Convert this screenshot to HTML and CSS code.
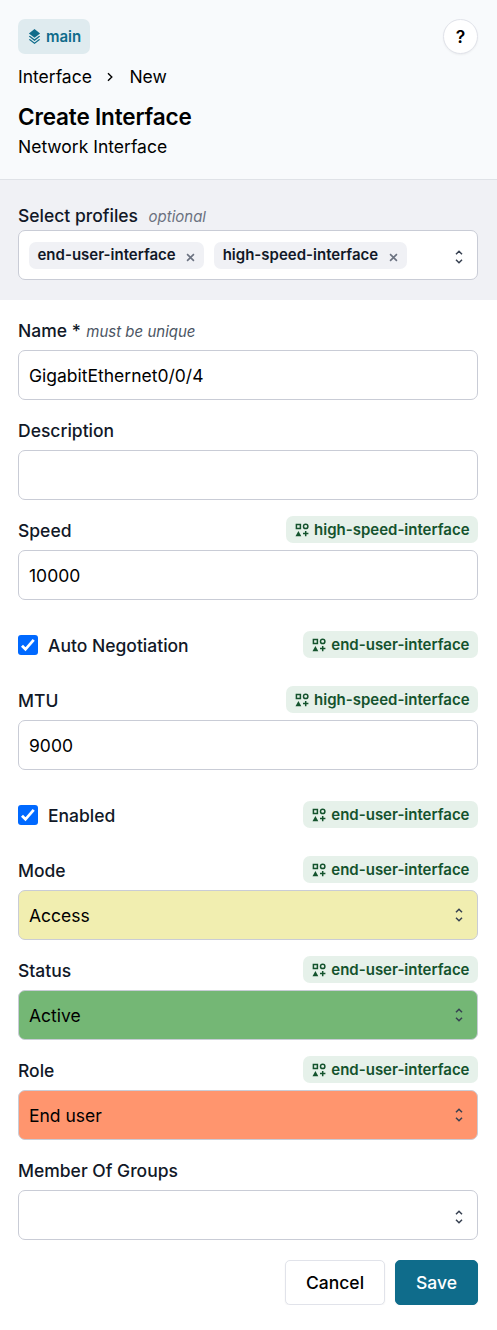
FILE: index.html
```html
<!DOCTYPE html>
<html lang="en">
<head>
<meta charset="utf-8">
<title>Create Interface</title>
<link rel="stylesheet" href="styles.css">
</head>
<body>
<svg class="sprite" aria-hidden="true">
  <symbol id="updown" viewBox="0 0 10 16"><path d="M2 5.200 5 2.200 8 5.200M2 10.800 5 13.800 8 10.800" fill="none" stroke="currentColor" stroke-width="1.5"/></symbol>
  <symbol id="shapes" viewBox="0 0 14 14"><path d="M1.4 1.4h4v4h-4z" fill="none" stroke="currentColor" stroke-width="1.5"/><circle cx="10.7" cy="3.4" r="2.2" fill="none" stroke="currentColor" stroke-width="1.5"/><path d="M3.4 8 6.300 13.300H.5z" fill="currentColor"/><path d="M10.7 7.900v5.400M8 10.6h5.400" fill="none" stroke="currentColor" stroke-width="1.5"/></symbol>
  <symbol id="cross" viewBox="0 0 10 10"><path d="m1.2 1.2 7.6 7.6m0-7.6-7.6 7.6" fill="none" stroke="currentColor" stroke-width="1.8"/></symbol>
</svg>
<header class="header">
  <div class="topbar">
    <button class="branch"><svg class="layers" viewBox="0 0 24 24"><path d="M12 0 3 7l9 7 9-7zM12 16.500 4.600 10.800 3 12l9 7 9-7-1.600-1.200zM12 21.500 4.600 15.800 3 17l9 7 9-7-1.600-1.200z" fill="currentColor"/></svg>main</button>
    <button class="help">?</button>
  </div>
  <nav class="crumbs"><span>Interface</span><svg class="crumb-arrow" viewBox="0 0 8 10"><path d="m2 1.200 3.800 3.800L2 8.800" fill="none" stroke="currentColor" stroke-width="1.400"/></svg><span>New</span></nav>
  <h1 class="title">Create Interface</h1>
  <p class="subtitle">Network Interface</p>
</header>
<section class="profiles">
  <div class="label-row"><span class="label">Select profiles</span><em class="hint hint-wide">optional</em></div>
  <div class="input select">
    <div class="chips">
      <span class="chip">end-user-interface<svg class="cross"><use href="#cross"/></svg></span>
      <span class="chip">high-speed-interface<svg class="cross"><use href="#cross"/></svg></span>
    </div>
    <svg class="updown"><use href="#updown"/></svg>
  </div>
</section>
<main class="form">
  <div class="field">
    <div class="label-row"><span class="label">Name *</span><em class="hint">must be unique</em></div>
    <div class="input">GigabitEthernet0/0/4</div>
  </div>
  <div class="field">
    <div class="label-row"><span class="label">Description</span></div>
    <div class="input"></div>
  </div>
  <div class="field">
    <div class="label-row"><span class="label">Speed</span><span class="badge"><svg class="shapes"><use href="#shapes"/></svg>high-speed-interface</span></div>
    <div class="input">10000</div>
  </div>
  <div class="check-row">
    <span class="box"><svg viewBox="0 0 20 20"><path d="m4 10.700 3.500 3.600L15.700 4.900" fill="none" stroke="#fff" stroke-width="2.800"/></svg></span>
    <span class="label">Auto Negotiation</span><span class="badge"><svg class="shapes"><use href="#shapes"/></svg>end-user-interface</span>
  </div>
  <div class="field">
    <div class="label-row"><span class="label">MTU</span><span class="badge"><svg class="shapes"><use href="#shapes"/></svg>high-speed-interface</span></div>
    <div class="input">9000</div>
  </div>
  <div class="check-row">
    <span class="box"><svg viewBox="0 0 20 20"><path d="m4 10.700 3.500 3.600L15.700 4.900" fill="none" stroke="#fff" stroke-width="2.800"/></svg></span>
    <span class="label">Enabled</span><span class="badge"><svg class="shapes"><use href="#shapes"/></svg>end-user-interface</span>
  </div>
  <div class="field">
    <div class="label-row"><span class="label">Mode</span><span class="badge"><svg class="shapes"><use href="#shapes"/></svg>end-user-interface</span></div>
    <div class="input select yellow">Access<svg class="updown"><use href="#updown"/></svg></div>
  </div>
  <div class="field">
    <div class="label-row"><span class="label">Status</span><span class="badge"><svg class="shapes"><use href="#shapes"/></svg>end-user-interface</span></div>
    <div class="input select green">Active<svg class="updown"><use href="#updown"/></svg></div>
  </div>
  <div class="field">
    <div class="label-row"><span class="label">Role</span><span class="badge"><svg class="shapes"><use href="#shapes"/></svg>end-user-interface</span></div>
    <div class="input select orange">End user<svg class="updown"><use href="#updown"/></svg></div>
  </div>
  <div class="field">
    <div class="label-row"><span class="label">Member Of Groups</span></div>
    <div class="input select groups"><svg class="updown"><use href="#updown"/></svg></div>
  </div>
  <div class="actions"><button class="btn">Cancel</button><button class="btn save">Save</button></div>
</main>
</body>
</html>
```
FILE: styles.css
```css
* { box-sizing: border-box; }
body { margin: 0; background: #fff; color: #000; font: 17.5px/25px Inter, sans-serif; }
button { font-family: inherit; border: 0; padding: 0; }
svg { display: block; flex: none; }
.sprite { display: none; }
.header { height: 180px; padding: 19px 19px 0 18px; background: #f8fafc; border-bottom: 1px solid #dfe2e7; }
.topbar { display: flex; justify-content: space-between; }
.branch { display: flex; align-items: center; height: 35px; width: 72px; padding-left: 9px; gap: 4px; border-radius: 7px; background: #dfebef; color: #0f6c8b; font-size: 15px; font-weight: 600; }
.layers { width: 15px; height: 15px; }
.help { width: 35px; height: 35px; border: 1px solid #e1e3ea; border-radius: 50%; background: #fff; color: #000; font-size: 17.5px; font-weight: 600; box-shadow: 0 1px 2px #0000000d; }
.crumbs { display: flex; align-items: center; height: 25px; margin-top: 10px; }
.crumb-arrow { width: 8px; height: 10px; margin: 0 15px 0 14.5px; }
.title { margin: 10px 0 0; font-size: 22.5px; line-height: 35px; font-weight: 600; letter-spacing: -0.16px; }
.subtitle { margin: 0; }
.profiles { height: 120px; padding: 22px 19px 0 18px; background: #f0f1f5; }
.label-row { display: flex; align-items: center; height: 27px; margin-bottom: 7px; }
.profiles .label-row { height: 24px; margin-bottom: 4px; }
.label { color: #111827; font-weight: 500; line-height: 27px; position: relative; top: 1px; }
.hint { margin-left: 5.5px; color: #4b5563; font-size: 15px; position: relative; top: 2px; }
.hint-wide { margin-left: 10.5px; color: #6b7280; }
.input { display: flex; align-items: center; height: 50px; padding: 0 13px 0 10px; border: 1px solid #c9ccd6; border-radius: 7px; background: #fff; }
.select { justify-content: space-between; }
.updown { width: 10px; height: 16px; color: #374151; }
.profiles .updown { margin-top: 3px; }
.groups { justify-content: flex-end; }
.groups .updown { margin-top: 3px; }
.chips { display: flex; gap: 10px; }
.chip { display: flex; align-items: center; height: 27px; padding: 0 9px 1px 8.5px; border-radius: 7px; background: #f0f1f5; color: #111827; font-size: 15px; font-weight: 600; }
.cross { width: 9px; height: 9px; margin: 5px 0 0 10.5px; color: #6b7280; }
.yellow { background: #f1eeb0; }
.green { background: #74b775; }
.orange { background: #ff956e; }
.form { padding: 16px 19px 0 18px; }
.field { margin-bottom: 16px; }
.badge { display: flex; align-items: center; height: 27px; margin-left: auto; padding: 0 8.5px; gap: 5.5px; border-radius: 7px; background: #e6f1ea; color: #14532d; font-size: 15px; font-weight: 600; }
.shapes { width: 14px; height: 14px; }
.check-row { display: flex; align-items: center; height: 27px; margin: 31px 0 28px; }
.box { width: 20px; height: 20px; margin-right: 10px; border-radius: 3px; background: #0069ff; }
.actions { display: flex; justify-content: flex-end; gap: 10px; margin-top: 20px; }
.btn { width: 100px; height: 45px; border: 1px solid #e1e3ea; border-radius: 5px; background: #fff; color: #000; font-size: 17.5px; font-weight: 500; box-shadow: 0 1px 2px #0000000d; }
.save { width: 83px; border-color: #0f6c8b; background: #0f6c8b; color: #fff; }
```
